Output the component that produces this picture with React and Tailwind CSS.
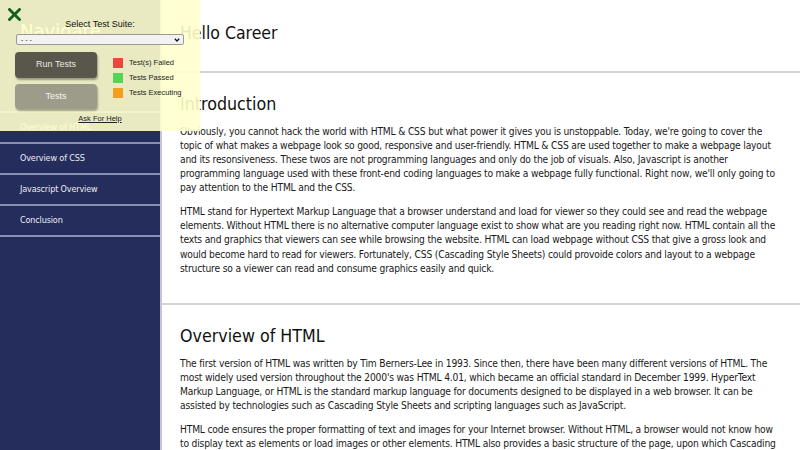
import React from "react";

const navLinks = ["Overview of HTML", "Overview of CSS", "Javascript Overview", "Conclusion"];

const sections = [
  {
    title: "Introduction",
    paragraphs: [
      "Obviously, you cannot hack the world with HTML & CSS but what power it gives you is unstoppable. Today, we're going to cover the topic of what makes a webpage look so good, responsive and user-friendly. HTML & CSS are used together to make a webpage layout and its resonsiveness. These twos are not programming languages and only do the job of visuals. Also, Javascript is another programming language used with these front-end coding languages to make a webpage fully functional. Right now, we'll only going to pay attention to the HTML and the CSS.",
      "HTML stand for Hypertext Markup Language that a browser understand and load for viewer so they could see and read the webpage elements. Without HTML there is no alternative computer language exist to show what are you reading right now. HTML contain all the texts and graphics that viewers can see while browsing the website. HTML can load webpage without CSS that give a gross look and would become hard to read for viewers. Fortunately, CSS (Cascading Style Sheets) could provoide colors and layout to a webpage structure so a viewer can read and consume graphics easily and quick.",
    ],
  },
  {
    title: "Overview of HTML",
    paragraphs: [
      "The first version of HTML was written by Tim Berners-Lee in 1993. Since then, there have been many different versions of HTML. The most widely used version throughout the 2000's was HTML 4.01, which became an official standard in December 1999. HyperText Markup Language, or HTML is the standard markup language for documents designed to be displayed in a web browser. It can be assisted by technologies such as Cascading Style Sheets and scripting languages such as JavaScript.",
      "HTML code ensures the proper formatting of text and images for your Internet browser. Without HTML, a browser would not know how to display text as elements or load images or other elements. HTML also provides a basic structure of the page, upon which Cascading Style Sheets are overlaid to change its appearance.",
    ],
  },
];

const TestSuite = () => (
  <div className="absolute left-0 top-0 w-[200px] h-[131px] bg-[rgba(255,255,204,0.9)] font-['Liberation_Sans',Arial,sans-serif]">
    {/* close */}
    <svg className="absolute left-[8px] top-[8px]" width="13" height="13" viewBox="0 0 13 13">
      <path d="M1.5 1.5 L11.5 11.5 M11.5 1.5 L1.5 11.5" stroke="#13601a" strokeWidth="2.8" strokeLinecap="square" />
    </svg>

    <p className="pt-[18px] text-center text-[9px] leading-[12px] text-[#111]">Select Test Suite:</p>
    <div className="mx-[16px] mt-[4px] h-[11px] flex items-center justify-between bg-[#f2f2f2] border border-[#9a9a9a] rounded-[2px] pl-[4px] pr-[3px]">
      <span className="text-[7px] leading-none text-[#333]">- - -</span>
      <svg width="6" height="4" viewBox="0 0 6 4">
        <path d="M0.8 0.8 L3 3 L5.2 0.8" stroke="#111" strokeWidth="1.3" fill="none" />
      </svg>
    </div>

    <div className="flex pl-[15px] pt-[7px]">
      <div className="flex flex-col gap-[6px]">
        <button className="w-[82px] h-[26px] rounded-[4px] bg-[#59574b] text-[9px] text-[#e8e8e0] shadow-[1px_2px_2px_rgba(0,0,0,0.35)]">
          Run Tests
        </button>
        <button className="w-[82px] h-[25px] rounded-[4px] bg-[#9d9c8b] text-[9px] text-[#f4f4ee] shadow-[1px_2px_2px_rgba(0,0,0,0.3)]">
          Tests
        </button>
      </div>
      <div className="ml-[16px] pt-[6px] flex flex-col gap-[5px]">
        {[
          ["bg-[#ec473e]", "Test(s) Failed"],
          ["bg-[#53d656]", "Tests Passed"],
          ["bg-[#f59d1d]", "Tests Executing"],
        ].map(([color, label]) => (
          <div key={label} className="flex items-center gap-[6px] h-[10px]">
            <span className={`w-[10px] h-[10px] ${color}`} />
            <span className="text-[7.5px] text-[#222]">{label}</span>
          </div>
        ))}
      </div>
    </div>

    <p className="mt-[5px] text-center text-[7.5px] leading-[10px] text-[#222] underline">Ask For Help</p>
  </div>
);

export default function App() {
  return (
    <div className="relative flex min-h-screen bg-white font-['DejaVu_Sans_Condensed','DejaVu_Sans',sans-serif]">
      {/* Sidebar */}
      <nav className="w-[162px] shrink-0 bg-[#252d5d] border-r-2 border-[#c3c6d9]">
        <header className="h-[113px] border-b-2 border-[#8a90b2] pl-[20px] pt-[19px]">
          <h1 className="text-[20px] leading-[24px] text-white">Navigate</h1>
        </header>
        {navLinks.map((link) => (
          <a
            key={link}
            href="#"
            className="block h-[31px] border-b-2 border-[#8a90b2] pl-[20px] text-[9px] tracking-[-0.15px] leading-[29px] text-[#ececf2]"
          >
            {link}
          </a>
        ))}
      </nav>

      {/* Main */}
      <main className="flex-1 text-[#1a1a1a]">
        <header className="h-[73px] border-b-2 border-[#d4d4d4] pl-[18px] pt-[21px]">
          <h1 className="text-[17.5px] leading-[24px] text-[#111]">Hello Career</h1>
        </header>
        {sections.map((s) => (
          <section key={s.title} className="border-b-2 border-[#d4d4d4] pl-[18px] pr-[20px] pt-[19px] pb-[27px]">
            <h2 className="text-[17.7px] leading-[24px] text-[#111] mb-[8.5px]">{s.title}</h2>
            {s.paragraphs.map((p, i) => (
              <p key={i} className="text-[10.2px] tracking-[-0.18px] leading-[14.2px] mb-[9.5px] last:mb-0">
                {p}
              </p>
            ))}
          </section>
        ))}
      </main>

      <TestSuite />
    </div>
  );
}
